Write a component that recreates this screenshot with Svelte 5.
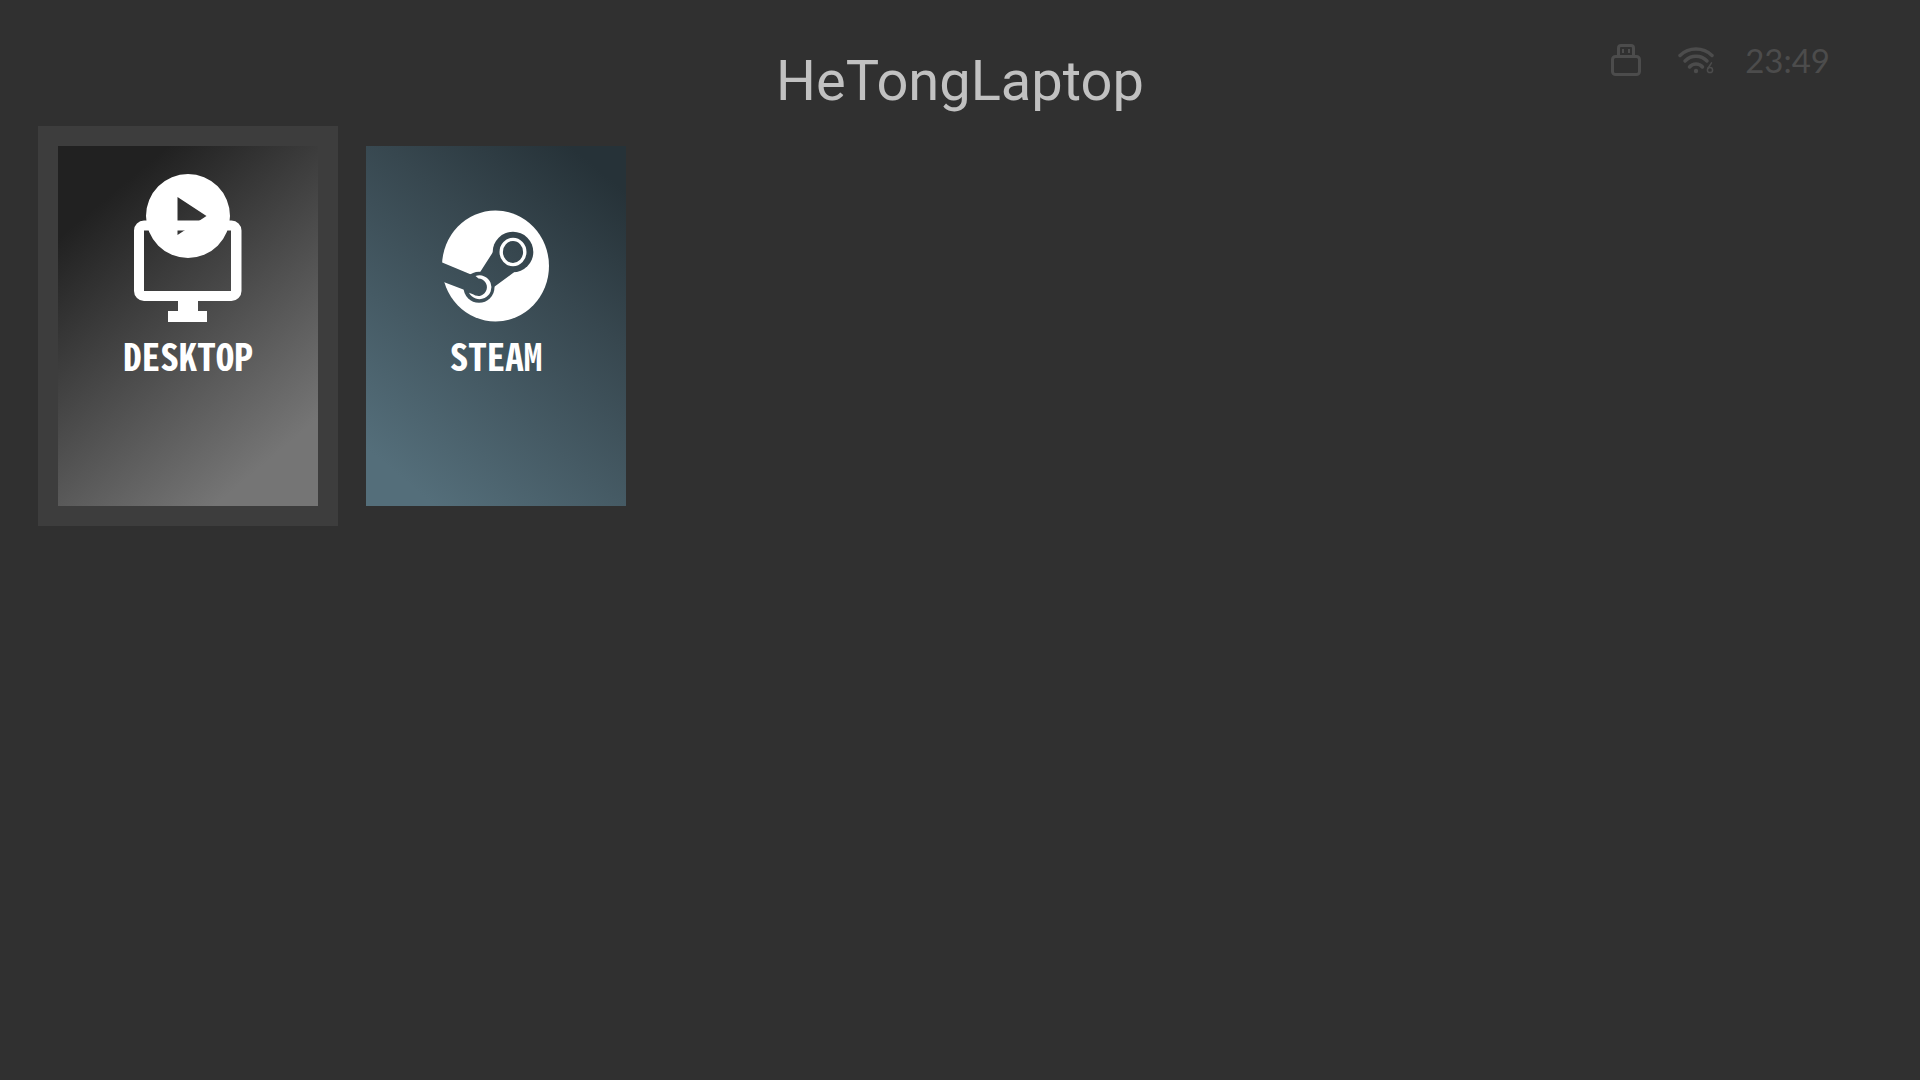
<script>
	const apps = [
		{ id: 'desktop', name: 'DESKTOP', running: true },
		{ id: 'steam', name: 'STEAM', running: false }
	];

	let hostName = 'HeTongLaptop';
	let clock = '23:49';
	let selected = 'desktop';
</script>

<svelte:head>
	<title>{hostName}</title>
</svelte:head>

<main class="app-view">
	<header class="top-bar">
		<h1 class="host-name">{hostName}</h1>

		<div class="status">
			<svg class="usb" width="30" height="34" viewBox="0 0 30 34" role="img" aria-label="USB" fill="none" stroke="currentColor" stroke-width="3">
				<rect x="1.5" y="13.5" width="27" height="18" rx="3" />
				<path d="M7.5 13.5V5a2.5 2.5 0 0 1 2.5-2.5h10a2.5 2.5 0 0 1 2.5 2.5v8.5" />
				<path d="M12 6v4M18 6v4" stroke-width="2" />
			</svg>
			<svg class="wifi" width="38" height="34" viewBox="0 0 38 34" role="img" aria-label="Wi-Fi" fill="none" stroke="currentColor" stroke-width="3.5" stroke-linecap="round">
				<path d="M2 12.5a23 23 0 0 1 32 0" />
				<path d="M7 18a15 15 0 0 1 22 0" />
				<path d="M11.5 24a8.5 8.5 0 0 1 13 0" />
				<circle cx="18" cy="28" r="2.2" fill="currentColor" stroke="none" />
				<path d="M33.5 19.8l-3.7 5.7" stroke-width="1.5" />
				<circle cx="32" cy="27" r="2.6" stroke-width="1.5" />
			</svg>
			<time class="clock">{clock}</time>
		</div>
	</header>

	<div class="app-grid">
		{#each apps as app (app.id)}
			<button
				type="button"
				class="app-item"
				class:selected={selected === app.id}
				on:click={() => (selected = app.id)}
			>
				<span class="box-art {app.id}">
					{#if app.id === 'desktop'}
						<svg class="logo" width="110" height="182" viewBox="133 140 110 182" aria-hidden="true" fill="#fff">
							<path fill-rule="evenodd" d="M144 220.5h87.500a10 10 0 0 1 10 10v60.5a10 10 0 0 1-10 10h-33.5v10h9v11h-39v-11h10v-10h-34a10 10 0 0 1-10-10v-60.5a10 10 0 0 1 10-10zM144 230.5v60.5h87v-60.5z" />
							{#if app.running}
								<path fill-rule="evenodd" d="M188 174a42 42 0 1 1 0 84a42 42 0 1 1 0-84zM177.5 197v38l29-19z" />
							{/if}
						</svg>
					{:else}
						<svg class="logo" width="110" height="182" viewBox="441 140 110 182" aria-hidden="true">
							<mask id="steam-cut">
								<rect x="440" y="140" width="112" height="182" fill="#fff" />
								<path d="M438 260.7L471 274.5L480 272.3L493 252L514 272.3L494 287L465.3 290.3L438 279.8z" fill="#000" />
								<circle cx="513" cy="252" r="20.3" fill="#000" />
								<circle cx="479" cy="287.3" r="15.5" fill="#000" />
							</mask>
							<ellipse cx="495.5" cy="266" rx="53.5" ry="55.5" fill="#fff" mask="url(#steam-cut)" />
							<ellipse cx="513" cy="252" rx="11.8" ry="12.6" fill="none" stroke="#fff" stroke-width="3.4" />
							<path d="M475.500 276.1A11.9 11.9 0 1 1 469 292.8L473.5 294.5A8.7 8.7 0 1 0 478.5 278.500z" fill="#fff" />
						</svg>
					{/if}
					<span class="app-name">{app.name}</span>
				</span>
			</button>
		{/each}
	</div>
</main>

<style>
	:global(body) {
		margin: 0;
		background-color: #303030;
	}

	.app-view {
		min-height: 100vh;
		color: #fff;
		background-color: #303030;
		font-family: Roboto, sans-serif;
	}

	.top-bar {
		display: grid;
		grid-template-columns: 1fr auto 1fr;
		align-items: start;
		height: 126px;
		padding: 0 90px;
		box-sizing: border-box;
	}

	.host-name {
		grid-column: 2;
		margin: 0;
		padding-top: 48px;
		font-size: 56px;
		font-weight: 400;
		line-height: 66px;
		color: #c1c1c1;
	}

	.status {
		display: flex;
		align-items: center;
		justify-content: flex-end;
		padding-top: 40px;
		color: #4c4c4c;
	}

	.usb {
		margin-right: 37px;
	}

	.wifi {
		margin-right: 29px;
	}

	.clock {
		font-family: Lato, sans-serif;
		font-size: 33px;
		line-height: 40px;
	}

	.app-grid {
		display: flex;
		flex-wrap: wrap;
		gap: 8px;
		padding: 0 38px;
	}

	.app-item {
		padding: 20px;
		border: none;
		background: none;
		cursor: pointer;
	}

	.app-item.selected {
		background-color: #3d3d3d;
	}

	.app-item:focus-visible {
		outline: 2px solid #757575;
	}

	.box-art {
		display: flex;
		flex-direction: column;
		align-items: center;
		box-sizing: border-box;
		width: 260px;
		height: 360px;
	}

	.desktop {
		background: linear-gradient(140deg, #212121 16%, #757575 85%);
	}

	.steam {
		background: linear-gradient(40deg, #546e7a 10%, #37474f 65%, #263238 92%);
	}

	.logo {
		display: block;
		flex: none;
		margin-top: -6px;
	}

	.app-name {
		margin-top: 6px;
		font-family: 'Noto Sans Mono CJK SC', 'Liberation Sans Narrow', sans-serif;
		font-size: 37px;
		font-weight: 700;
		line-height: 54px;
		color: #fff;
	}
</style>
